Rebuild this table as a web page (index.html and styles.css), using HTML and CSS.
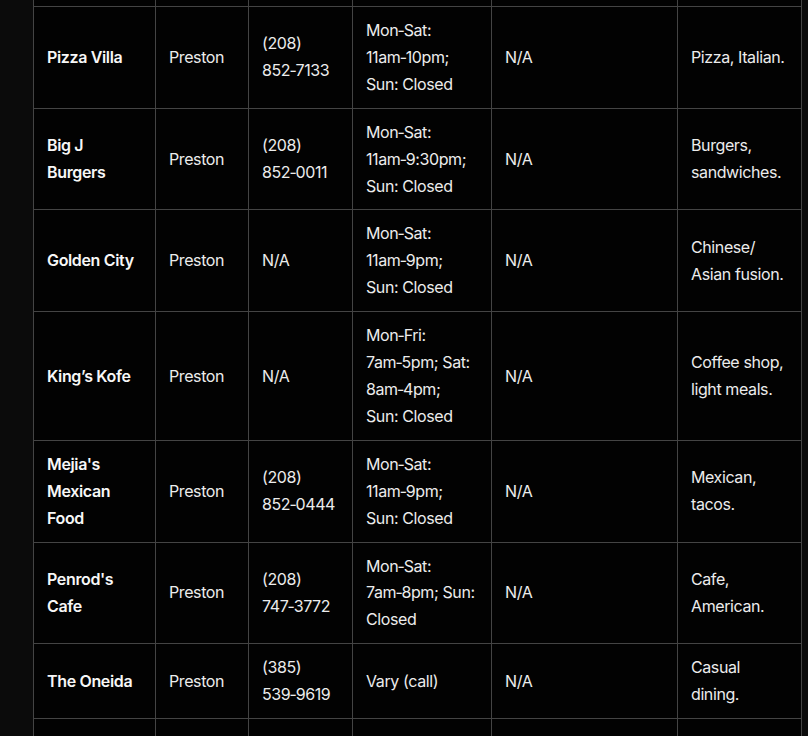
FILE: index.html
```html
<!DOCTYPE html>
<html lang="en">
<head>
<meta charset="utf-8">
<title>Restaurants in Preston</title>
<link rel="stylesheet" href="styles.css">
</head>
<body>
<div class="page">
<table class="grid">
<colgroup>
<col class="c-name"><col class="c-town"><col class="c-phone"><col class="c-hours"><col class="c-web"><col class="c-notes">
</colgroup>
<tbody>
<tr class="cut-top"><td></td><td></td><td></td><td></td><td></td><td></td></tr>
<tr><td class="name">Pizza Villa</td><td>Preston</td><td>(208) 852‑7133</td><td>Mon‑Sat:<br>11am‑10pm;<br>Sun: Closed</td><td>N/A</td><td>Pizza, Italian.</td></tr>
<tr><td class="name">Big J Burgers</td><td>Preston</td><td>(208) 852‑0011</td><td>Mon‑Sat:<br>11am‑9:30pm;<br>Sun: Closed</td><td>N/A</td><td>Burgers, sandwiches.</td></tr>
<tr><td class="name">Golden City</td><td>Preston</td><td>N/A</td><td>Mon‑Sat:<br>11am‑9pm;<br>Sun: Closed</td><td>N/A</td><td>Chinese/&#8203;Asian fusion.</td></tr>
<tr><td class="name">King’s Kofe</td><td>Preston</td><td>N/A</td><td>Mon‑Fri:<br>7am‑5pm; Sat:<br>8am‑4pm;<br>Sun: Closed</td><td>N/A</td><td>Coffee shop, light meals.</td></tr>
<tr><td class="name">Mejia's Mexican Food</td><td>Preston</td><td>(208) 852‑0444</td><td>Mon‑Sat:<br>11am‑9pm;<br>Sun: Closed</td><td>N/A</td><td>Mexican, tacos.</td></tr>
<tr><td class="name">Penrod's Cafe</td><td>Preston</td><td>(208) 747‑3772</td><td>Mon‑Sat:<br>7am‑8pm; Sun:<br>Closed</td><td>N/A</td><td>Cafe, American.</td></tr>
<tr><td class="name">The Oneida</td><td>Preston</td><td>(385) 539‑9619</td><td>Vary (call)</td><td>N/A</td><td>Casual dining.</td></tr>
<tr class="cut-bottom"><td></td><td></td><td></td><td></td><td></td><td></td></tr>
</tbody>
</table>
</div>
</body>
</html>
```
FILE: styles.css
```css
html, body {
  margin: 0;
  padding: 0;
  background: #0b0b0b;
  overflow: hidden;
}
.page {
  padding-left: 33px;
  height: 736px;
  overflow: hidden;
}
.grid {
  border-collapse: collapse;
  table-layout: fixed;
  width: 768px;
  background: #020202;
  font-family: Inter, "Noto Sans", sans-serif;
  font-size: 16px;
  line-height: 26.9px;
  letter-spacing: -0.4px;
  color: #ececec;
}
.c-name { width: 122px; }
.c-town { width: 93px; }
.c-phone { width: 104px; }
.c-hours { width: 139px; }
.c-web { width: 186px; }
.c-notes { width: 124px; }
.grid td {
  border: 1px solid #444444;
  padding: 10px 11px 10px 13px;
  vertical-align: middle;
  text-align: left;
}
.grid td.name {
  font-weight: 600;
  letter-spacing: -0.35px;
  color: #f7f7f7;
}
.cut-top td {
  border-top: none;
  height: 6px;
  padding: 0;
}
.cut-bottom td {
  border-bottom: none;
  height: 90px;
}
```
